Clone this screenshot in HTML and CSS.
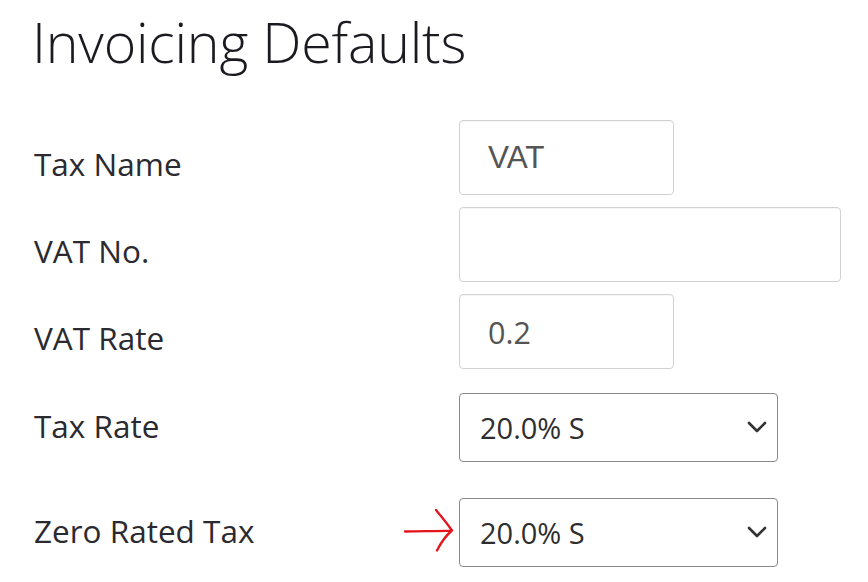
FILE: index.html
```html
<!DOCTYPE html>
<html lang="en">
<head>
  <meta charset="UTF-8" />
  <title>Invoicing Defaults</title>
  <link rel="stylesheet" href="styles.css">
</head>
<body>
  <div class="page">
    <h1 class="title">Invoicing Defaults</h1>

    <form class="settings">
      <div class="row">
        <label class="label" for="tax-name">Tax Name</label>
        <input class="field field-short field-arial" id="tax-name" type="text" value="VAT" />
      </div>

      <div class="row">
        <label class="label" for="vat-no">VAT No.</label>
        <input class="field field-long" id="vat-no" type="text" value="" />
      </div>

      <div class="row">
        <label class="label" for="vat-rate">VAT Rate</label>
        <input class="field field-short" id="vat-rate" type="text" value="0.2" />
      </div>

      <div class="row row-select">
        <label class="label" for="tax-rate">Tax Rate</label>
        <div class="select-wrap">
          <select class="select" id="tax-rate">
            <option>20.0% S</option>
            <option>5.0% R</option>
            <option>0.0% Z</option>
          </select>
          <svg class="chevron" width="20" height="12" viewBox="0 0 20 12"><path d="M2 2l8 8 8-8" fill="none" stroke="#333" stroke-width="2.6" stroke-linecap="round" stroke-linejoin="round"/></svg>
        </div>
      </div>

      <div class="row row-select row-last">
        <label class="label" for="zero-tax">Zero Rated Tax</label>
        <div class="select-wrap">
          <!-- annotation arrow pointing at the field -->
          <svg class="pointer" width="54" height="44" viewBox="0 0 54 44"><path d="M2 23.5C17 23 33 23.2 49 22.6M33 2c5 6 11 13 16 20.5c-6 5-11 12-15 20" fill="none" stroke="#e3141b" stroke-width="2.3" stroke-linecap="round" stroke-linejoin="round"/></svg>
          <select class="select" id="zero-tax">
            <option>20.0% S</option>
            <option>5.0% R</option>
            <option>0.0% Z</option>
          </select>
          <svg class="chevron" width="20" height="12" viewBox="0 0 20 12"><path d="M2 2l8 8 8-8" fill="none" stroke="#333" stroke-width="2.6" stroke-linecap="round" stroke-linejoin="round"/></svg>
        </div>
      </div>
    </form>
  </div>
</body>
</html>
```

FILE: styles.css
```css
* { box-sizing: border-box; margin: 0; padding: 0; }

body {
  background: #fff;
  font-family: 'Open Sans', 'Liberation Sans', sans-serif;
  color: #333;
}

.page {
  padding: 8px 0 0 32px;
}

/* Heading */
.title {
  font-size: 55.5px;
  font-weight: 300;
  line-height: 67px;
  color: #1a1a20;
  letter-spacing: -0.2px;
}

/* Form rows */
.settings {
  margin-top: 45px;
}
.row {
  display: flex;
  align-items: flex-end;
  margin-bottom: 12px;
}
.row-select {
  margin-top: 24px;
}
.row-last {
  margin-top: 36px;
}
.label {
  width: 427px;
  padding-left: 2px;
  font-size: 31.5px;
  line-height: 30px;
  padding-bottom: 16px;
  color: #2a2a30;
}
.row-select .label {
  padding-bottom: 21px;
}

/* Text inputs */
.field {
  height: 75px;
  border: 1px solid #d2d2d2;
  border-radius: 4px;
  padding: 0 0 0 28px;
  font-family: 'Open Sans', sans-serif;
  font-size: 30.5px;
  color: #555;
  background: #fff;
  box-shadow: inset 0 1px 1px rgba(0,0,0,0.04);
  outline: none;
}
.field-arial {
  font-family: 'Liberation Sans', Arial, sans-serif;
  font-size: 31.5px;
}
.field-short { width: 215px; }
.field-long  { width: 382px; }

/* Selects */
.select-wrap {
  position: relative;
}
.select {
  appearance: none;
  -webkit-appearance: none;
  display: block;
  width: 319px;
  height: 69px;
  border: 1px solid #8a8a8a;
  border-radius: 4px;
  padding: 0 0 0 20px;
  font-family: 'Open Sans', sans-serif;
  font-size: 29px;
  color: #2e2e2e;
  background: #fff;
  outline: none;
}
.chevron {
  position: absolute;
  right: 11px;
  top: 28px;
  pointer-events: none;
}
.pointer {
  position: absolute;
  left: -56px;
  top: 10px;
}
```
